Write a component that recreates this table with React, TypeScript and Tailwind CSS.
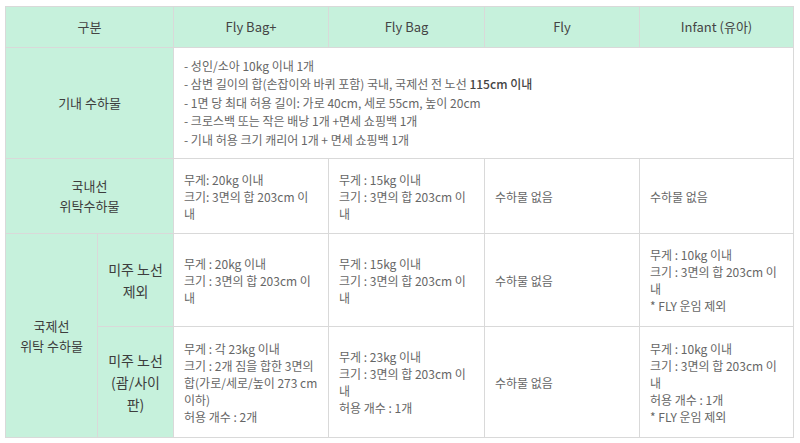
import React from "react";

const mint = "bg-[#c6f1dc]";
const th = `${mint} border border-[#d9d9d9] text-[13px] text-[#444] font-normal text-center align-middle`;
const rowHead = `${mint} border border-[#d9d9d9] text-[13px] leading-[20px] text-[#3d3d3d] text-center align-middle px-2`;
const td = "border border-[#d9d9d9] text-[12px] leading-[17px] text-[#666] align-middle pl-[10px] pr-1";

function Lines({ items }: { items: string[] }) {
  return (
    <>
      {items.map((t, i) => (
        <div key={i} className="whitespace-nowrap">
          {t}
        </div>
      ))}
    </>
  );
}

export default function App() {
  return (
    <div className="bg-white w-[800px] h-[443px] pt-[6px] pl-[5px]" style={{ fontFamily: '"Noto Sans CJK KR", "Noto Sans", sans-serif' }}>
      <table className="table-fixed border-collapse w-[788px]">
        <colgroup>
          <col className="w-[92px]" />
          <col className="w-[76px]" />
          <col className="w-[155px]" />
          <col className="w-[156px]" />
          <col className="w-[155px]" />
          <col className="w-[154px]" />
        </colgroup>
        <thead>
          <tr className="h-[41px]">
            <th colSpan={2} className={th}>구분</th>
            <th className={th}>Fly Bag+</th>
            <th className={th}>Fly Bag</th>
            <th className={th}>Fly</th>
            <th className={th}>Infant (유아)</th>
          </tr>
        </thead>
        <tbody>
          <tr className="h-[111px]">
            <td colSpan={2} className={rowHead}>기내 수하물</td>
            <td colSpan={4} className={`${td} leading-[18.5px]`}>
              <div>- 성인/소아 10kg 이내 1개</div>
              <div>
                - 삼변 길이의 합(손잡이와 바퀴 포함) 국내, 국제선 전 노선{" "}
                <span className="font-medium text-[#444]">115cm 이내</span>
              </div>
              <div>- 1면 당 최대 허용 길이: 가로 40cm, 세로 55cm, 높이 20cm</div>
              <div>- 크로스백 또는 작은 배낭 1개 +면세 쇼핑백 1개</div>
              <div>- 기내 허용 크기 캐리어 1개 + 면세 쇼핑백 1개</div>
            </td>
          </tr>
          <tr className="h-[75px]">
            <td colSpan={2} className={rowHead}>
              국내선
              <br />
              위탁수하물
            </td>
            <td className={td}>
              <Lines items={["무게: 20kg 이내", "크기: 3면의 합 203cm 이", "내"]} />
            </td>
            <td className={td}>
              <Lines items={["무게 : 15kg 이내", "크기 : 3면의 합 203cm 이", "내"]} />
            </td>
            <td className={td}>수하물 없음</td>
            <td className={td}>수하물 없음</td>
          </tr>
          <tr className="h-[93px]">
            <td rowSpan={2} className={rowHead}>
              국제선
              <br />
              위탁 수하물
            </td>
            <td className={`${rowHead} text-[14px] leading-[22px]`}>
              미주 노선
              <br />
              제외
            </td>
            <td className={td}>
              <Lines items={["무게 : 20kg 이내", "크기 : 3면의 합 203cm 이", "내"]} />
            </td>
            <td className={td}>
              <Lines items={["무게 : 15kg 이내", "크기 : 3면의 합 203cm 이", "내"]} />
            </td>
            <td className={td}>수하물 없음</td>
            <td className={td}>
              <Lines items={["무게 : 10kg 이내", "크기 : 3면의 합 203cm 이", "내", "* FLY 운임 제외"]} />
            </td>
          </tr>
          <tr className="h-[111px]">
            <td className={`${rowHead} text-[14px] leading-[22px]`}>
              미주 노선
              <br />
              (괌/사이
              <br />
              판)
            </td>
            <td className={td}>
              <Lines
                items={["무게 : 각 23kg 이내", "크기 : 2개 짐을 합한 3면의", "합(가로/세로/높이 273 cm", "이하)", "허용 개수 : 2개"]}
              />
            </td>
            <td className={td}>
              <Lines items={["무게 : 23kg 이내", "크기 : 3면의 합 203cm 이", "내", "허용 개수 : 1개"]} />
            </td>
            <td className={td}>수하물 없음</td>
            <td className={td}>
              <Lines items={["무게 : 10kg 이내", "크기 : 3면의 합 203cm 이", "내", "허용 개수 : 1개", "* FLY 운임 제외"]} />
            </td>
          </tr>
        </tbody>
      </table>
    </div>
  );
}
